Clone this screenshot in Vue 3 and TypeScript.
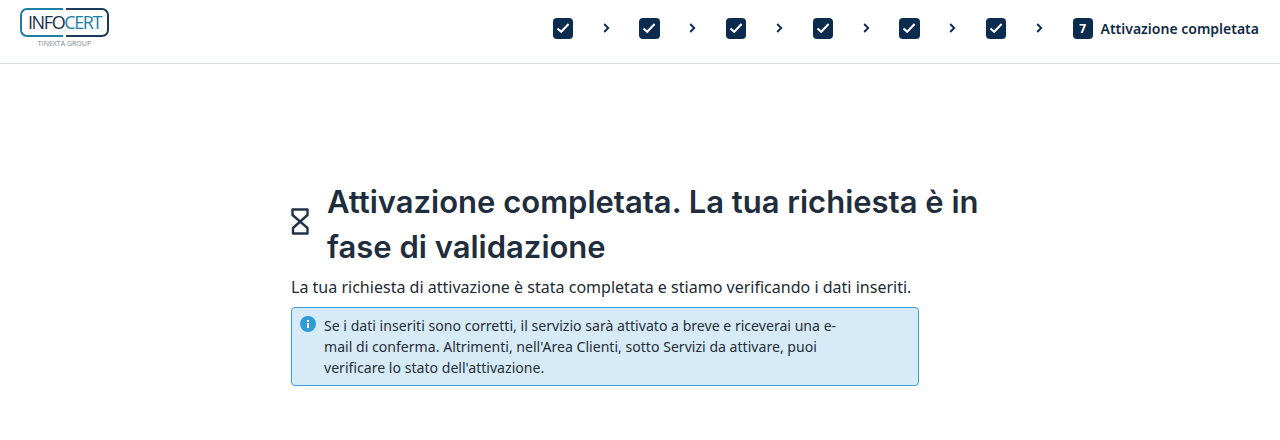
<template>
  <div class="page">
    <header class="topbar">
      <div class="logo">
        <div class="logo-box">
          <svg class="logo-frame" width="89" height="29" viewBox="0 0 89 29" fill="none">
            <path d="M43 1H7A6 6 0 0 0 1 7V22A6 6 0 0 0 7 28H43" stroke="#1b7ea6" stroke-width="2" />
            <path d="M46 1H82A6 6 0 0 1 88 7V22A6 6 0 0 1 82 28H46" stroke="#1c3a5e" stroke-width="2" />
          </svg>
          <span class="logo-info">INFO</span><span class="logo-cert">CERT</span>
        </div>
        <span class="logo-sub">TINEXTA GROUP</span>
      </div>
      <ol class="steps">
        <template v-for="n in 6" :key="n">
          <li class="badge">
            <svg width="14" height="12" viewBox="0 0 14 12" fill="none">
              <path d="M1.5 6.4 5.2 9.8 12.6 2" stroke="#fff" stroke-width="2" />
            </svg>
          </li>
          <li class="chevron">
            <svg width="7" height="10" viewBox="0 0 7 10" fill="none">
              <path d="M1.2 1 5.2 5 1.2 9" stroke="#0b2c4f" stroke-width="1.9" />
            </svg>
          </li>
        </template>
        <li class="badge current">7</li>
        <li class="step-label">Attivazione completata</li>
      </ol>
    </header>

    <main class="content">
      <div class="title-row">
        <svg class="hourglass" width="18" height="27" viewBox="0 0 18 27" fill="none">
          <path d="M1.5 1.5H16.5V7L2 20V25.5H16.5V20L1.5 7Z" stroke="#223548" stroke-width="2.4" stroke-linejoin="round" />
        </svg>
        <h1>Attivazione completata. La tua richiesta è in fase di validazione</h1>
      </div>
      <p class="lead">La tua richiesta di attivazione è stata completata e stiamo verificando i dati inseriti.</p>
      <div class="notice">
        <svg class="info" width="16" height="16" viewBox="0 0 16 16">
          <circle cx="8" cy="8" r="8" fill="#2f9bd8" />
          <rect x="7" y="7" width="2" height="5" fill="#fff" />
          <rect x="7" y="4" width="2" height="2" fill="#fff" />
        </svg>
        <p>Se i dati inseriti sono corretti, il servizio sarà attivato a breve e riceverai una e-mail di conferma. Altrimenti, nell'Area Clienti, sotto Servizi da attivare, puoi verificare lo stato dell'attivazione.</p>
      </div>
    </main>
  </div>
</template>

<script setup lang="ts">
</script>

<style>
html, body {
  margin: 0;
  background: #fff;
}
</style>

<style scoped>
.page {
  font-family: "Noto Sans", "Open Sans", sans-serif;
  color: #212b36;
}

.topbar {
  box-sizing: border-box;
  height: 64px;
  display: flex;
  justify-content: space-between;
  align-items: flex-start;
  border-bottom: 1px solid #d5dde5;
  padding: 8px 21px 0 20px;
}

.logo {
  width: 89px;
  display: flex;
  flex-direction: column;
  align-items: center;
}

.logo-box {
  position: relative;
  box-sizing: border-box;
  width: 89px;
  height: 29px;
  text-align: center;
  font-family: "Open Sans", sans-serif;
  font-size: 18px;
  font-weight: 500;
  line-height: 29px;
  letter-spacing: -1.4px;
}

.logo-frame {
  position: absolute;
  left: 0;
  top: 0;
}

.logo-info { color: #15324f; }
.logo-cert { color: #1b7ea6; }

.logo-sub {
  font-family: "Open Sans", sans-serif;
  font-size: 7px;
  line-height: 14px;
  color: #7c8690;
}

.steps {
  list-style: none;
  margin: 10px 0 0;
  padding: 0;
  display: flex;
  align-items: center;
}

.badge {
  width: 20.5px;
  height: 20.5px;
  border-radius: 4px;
  background: #0b2c4f;
  display: flex;
  align-items: center;
  justify-content: center;
}

.chevron {
  width: 66.17px;
  display: flex;
  justify-content: center;
}

.current {
  color: #fff;
  font-size: 12px;
  font-weight: 700;
}

.step-label {
  margin-left: 7.5px;
  font-size: 14px;
  font-weight: 600;
  color: #0f2b47;
}

.content {
  width: 698px;
  margin-left: 291px;
  padding-top: 115px;
}

.title-row {
  display: flex;
  align-items: center;
  gap: 18px;
}

.hourglass {
  flex: none;
  margin-bottom: 5px;
}

h1 {
  margin: 0;
  font-family: Inter, sans-serif;
  font-size: 31px;
  font-weight: 600;
  line-height: 45px;
  color: #1f2d3d;
}

.lead {
  margin: 6px 0 8px;
  font-size: 16.05px;
  line-height: 24px;
}

.notice {
  box-sizing: border-box;
  width: 628px;
  height: 79px;
  background: #d6ebf7;
  border: 1px solid #3b9fd9;
  border-radius: 4px;
  padding: 8px 8px 0 8px;
  display: flex;
  gap: 8px;
}

.info {
  flex: none;
}

.notice p {
  margin: 0;
  width: 520px;
  font-size: 14.1px;
  line-height: 20.8px;
  color: #262f38;
}
</style>
